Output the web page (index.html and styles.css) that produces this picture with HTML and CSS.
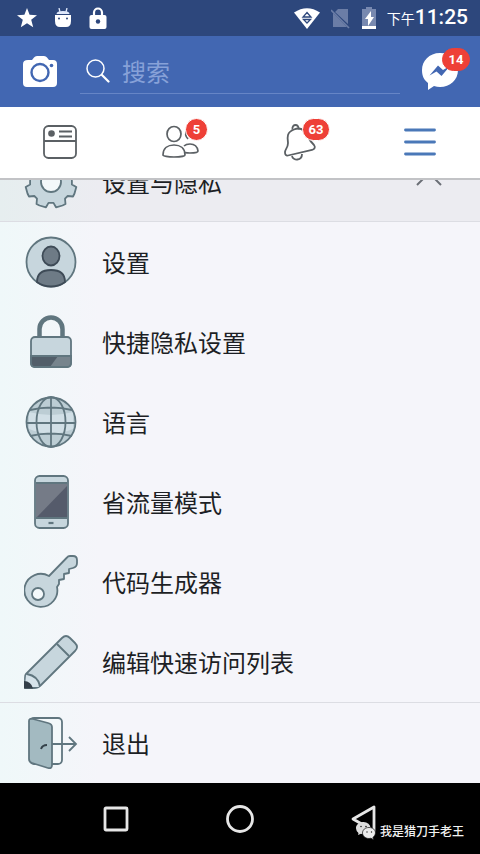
FILE: index.html
```html
<!DOCTYPE html>
<html lang="zh-CN">
<head>
<meta charset="utf-8">
<meta name="viewport" content="width=device-width, initial-scale=1">
<title>设置与隐私</title>
<link rel="stylesheet" href="styles.css">
</head>
<body>
<div class="status">
  <div class="status-left">
    <svg width="20" height="20" viewBox="0 0 20 20"><path fill="#fff" d="M10 0l2.600 6.800 7.400.4-5.800 4.600 2 7.400L10 15.200l-6.200 4 2-7.400L0 7.200l7.400-.4z"/></svg>
    <svg width="18" height="20" viewBox="0 0 18 20"><path d="M5 0l1 4M13 0l-1 4" stroke="#dfe8fb" stroke-width="1.300"/><path fill="#dfe8fb" d="M2.500 6q0-3 6.500-3t6.500 3z"/><path fill="#fff" d="M1 7h16v6q0 6-5 6H6q-5 0-5-6z"/><circle cx="5" cy="10.500" r="1" fill="#2d477c"/><circle cx="13" cy="10.500" r="1" fill="#2d477c"/></svg>
    <svg width="18" height="22" viewBox="0 0 18 22"><path d="M5 9V5.500a4 4 0 0 1 8 0V9" fill="none" stroke="#fff" stroke-width="2.200"/><rect x="0.500" y="8" width="17" height="14" rx="2" fill="#fff"/><circle cx="9" cy="14.500" r="2.200" fill="#2d477c"/></svg>
  </div>
  <div class="status-right">
    <svg width="26" height="21" viewBox="0 0 26 21"><path fill="#fff" d="M0 4.500Q13-4 26 4.500L13 21z"/><path d="M13 4.500l4 4.500H9zM9.500 11.500h7L13 15z" fill="none" stroke="#2d477c" stroke-width="1.300"/></svg>
    <svg width="20" height="21" viewBox="0 0 20 21"><path fill="#6b7da6" d="M7 1h10v15L4 4z M2 5l14 14H2z"/><path d="M0 2l18 18" stroke="#6b7da6" stroke-width="1.600"/></svg>
    <svg width="14" height="22" viewBox="0 0 14 22"><path fill="#7889b0" d="M4 0h6v2h4v17H0V2h4z"/><path fill="#fff" d="M0 19h14v3H0zM9 4v6h3l-6 9v-7H3z"/></svg>
    <span class="time"><small>下午</small>11:25</span>
  </div>
</div>

<header class="topbar">
  <button class="plain" aria-label="相机">
    <svg width="34" height="32" viewBox="0 0 34 32"><path fill="#fff" d="M5 4h4l2-2.500Q12 0 14 0h7q2 0 3 1.500L26 4h4q4 0 4 4v19q0 4-4 4H4q-4 0-4-4V8q0-4 5-4z"/><circle cx="17" cy="16.500" r="8.500" fill="none" stroke="#4267b2" stroke-width="2.400"/><circle cx="28.500" cy="9.500" r="1.800" fill="#4267b2"/></svg>
  </button>
  <label class="search">
    <svg width="24" height="24" viewBox="0 0 24 24" fill="none" stroke="#fff" stroke-linecap="round"><circle cx="9.500" cy="9.500" r="8.500" stroke-width="1.500"/><path d="M16 16l6.500 6.500" stroke-width="2.200"/></svg>
    <input type="text" placeholder="搜索" aria-label="搜索">
  </label>
  <button class="plain messenger" aria-label="消息">
    <svg width="38" height="37" viewBox="0 0 38 37"><path fill="#fff" d="M19 0C8 0 1 8 1 17c0 6 2 10 6 13v7l6-4q3 1 6 1c10 0 18-7 18-17S29 0 19 0z"/><path fill="#4267b2" d="M8.500 22.500L17 12.500l5 4.500 7-4-8.500 10-5-4.500z"/></svg>
    <span class="badge badge-messenger">14</span>
  </button>
</header>

<nav class="tabs">
  <a href="#feed" aria-label="动态">
    <svg width="36" height="36" viewBox="0 0 36 36" fill="none" stroke="#5b6064" stroke-width="1.800"><rect x="2" y="2" width="32" height="32" rx="4.500"/><path d="M2 17h32M17 7.500h13M17 12.500h13"/><circle cx="9.500" cy="9.500" r="3.300" fill="#5b6064" stroke="none"/></svg>
  </a>
  <a href="#friends" aria-label="好友">
    <svg width="38" height="36" viewBox="0 0 38 36" fill="none" stroke="#5b6064" stroke-width="1.700"><ellipse cx="13" cy="10" rx="7" ry="7.500"/><path d="M2 31c0-7 5-10 11-10s11 3 11 10c0 1-5 2-11 2s-11-1-11-2z"/><path d="M23 22q2-2 6-2 7 0 8 7 0 2-8 2-3 0-5-.4"/><path d="M26 6q-3 5 1 9"/></svg>
    <span class="badge">5</span>
  </a>
  <a href="#alerts" aria-label="通知">
    <svg width="36" height="38" viewBox="0 0 36 38" fill="none" stroke="#5b6064" stroke-width="1.800"><path d="M12 6.500C5 9 5 14 6 20c0 5-3 6-3 9.500 0 2 1 3.500 3 3l24-5.500c3-1 3.500-3 2-5-3-3-4-4-6-8-3-7-8-10-14-7.500z"/><path d="M10.500 6.500c-1-6 7-6 6 0M10 33c1 5 10 5 10-2"/></svg>
    <span class="badge badge-wide">63</span>
  </a>
  <a href="#menu" aria-label="菜单">
    <svg width="32" height="28" viewBox="0 0 32 28" fill="none" stroke="#4a78b8" stroke-width="2.800" stroke-linecap="round"><path d="M1.500 2h29M1.500 14h29M1.500 26h29"/></svg>
  </a>
</nav>

<main class="list">
  <button class="row heading">
    <svg class="icon" viewBox="-27 -27 54 54"><path class="body" d="M20.900 2.500L25.300 5 23.500 11.500 22 14.500 16.700 14 14 16.700 14.500 22 11.500 23.500 5 25.300 2.500 20.900H-2.500L-5 25.300-11.500 23.500-14.500 22-14 16.700-16.700 14-22 14.500-23.500 11.500-25.300 5-20.900 2.500V-2.500L-25.300-5-23.500-11.500-22-14.500-16.700-14-14-16.700-14.500-22-11.500-23.500-5-25.300-2.500-20.900H2.500L5-25.300 11.500-23.500 14.500-22 14-16.700 16.700-14 22-14.500 23.500-11.500 25.300-5 20.900-2.500z"/><circle class="hole" r="10"/></svg>
    <span>设置与隐私</span>
    <svg class="chevron" width="26" height="20" viewBox="0 0 26 20"><path d="M1 13L13 1l12 12" fill="none" stroke="#6b6f76" stroke-width="2"/></svg>
  </button>
  <a class="row" href="#settings">
    <svg class="icon" viewBox="0 0 54 54"><circle class="body" cx="27" cy="27" r="24.500"/><g fill="#6e7b86" stroke="#3e4b57" stroke-width="1.800"><ellipse cx="27" cy="21" rx="8.500" ry="9.500"/><path d="M13 47c0-8 5-12 14-12s14 4 14 12q-6 4.500-14 4.500T13 47z"/></g></svg>
    <span>设置</span>
  </a>
  <a class="row" href="#shortcuts">
    <svg class="icon" viewBox="0 0 54 54"><path d="M15.500 22V14a11.500 11.500 0 0 1 23 0v8" fill="none" stroke="#60767f" stroke-width="4.500"/><rect class="body" x="7" y="22" width="40" height="30" rx="4"/><path d="M7 41h40v7q0 4-4 4H11q-4 0-4-4z" fill="#525e69"/><path d="M34 41h13v7q0 4-4 4H26z" fill="#77848d"/><path class="line" d="M7 41h40v7q0 4-4 4H11q-4 0-4-4z"/></svg>
    <span>快捷隐私设置</span>
  </a>
  <a class="row" href="#language">
    <svg class="icon" viewBox="0 0 54 54"><circle cx="27" cy="27" r="24.500" fill="#bccdd4"/><path fill="#d1dfe6" d="M5 17q22 6 44 0v17q-22 9-44 0z"/><path class="line" d="M27 2v50M2 28h50M6 15q21-5 42 0M6 41q21-5 42 0"/><ellipse class="line" cx="27" cy="27" rx="14.500" ry="25"/><circle class="line" cx="27" cy="27" r="24.500"/></svg>
    <span>语言</span>
  </a>
  <a class="row" href="#data">
    <svg class="icon" viewBox="0 0 54 54"><rect class="body" x="11" y="1" width="33" height="52" rx="4.500"/><path fill="#555b6b" d="M12 8h31v35H12z"/><path fill="#757b87" d="M43 11L12 43V8h31z"/><path class="line" d="M12 8h31M12 43h31"/><path d="M24.500 48h5" stroke="#60767f" stroke-width="2.200"/></svg>
    <span>省流量模式</span>
  </a>
  <a class="row" href="#code">
    <svg class="icon" viewBox="0 0 54 54"><path class="body" d="M25 21L43 2.500Q44 1 46 1h3q4 0 4 4v3q0 4-4 5l-4 1v4l-5 1v5l-5 1v4l-2 3A16.500 16.500 0 1 1 25 21z"/><circle class="hole" cx="14" cy="39" r="6"/></svg>
    <span>代码生成器</span>
  </a>
  <a class="row" href="#quick">
    <svg class="icon" viewBox="0 0 54 54"><path class="body" d="M2 39L38 3q4-4 8 0l5 5q4 4 0 8L17 50q-3 3-7 3H1V43q0-3 1-4z"/><path fill="#d6e3ea" d="M2 40q11 1 13 12H1z"/><path fill="#343f49" d="M0 46q7 0 9 7.500H0z"/><path class="line" d="M33 9l12 12M3 39q11 2 13 12"/></svg>
    <span>编辑快速访问列表</span>
  </a>
  <a class="row exit" href="#logout">
    <svg class="icon" viewBox="0 0 54 54"><rect class="hole" x="6" y="2" width="32" height="46" rx="4"/><path d="M5 5q0-3 4-2l15 4q4 1 4 4v38q0 4-4 3L8 47q-3-1-3-4z" fill="#a3bac1" stroke="#60767f" stroke-width="1.800"/><path d="M17 33c1-3 3-4 6-4" fill="none" stroke="#35424a" stroke-width="1.900"/><path class="line" d="M28 28h24M45 21l7 7-7 7"/></svg>
    <span>退出</span>
  </a>
</main>

<footer class="navbar">
  <button class="plain" aria-label="最近"><svg width="28" height="28" viewBox="0 0 28 28"><rect x="3" y="3" width="22" height="22" rx="1"/></svg></button>
  <button class="plain" aria-label="主页"><svg width="28" height="28" viewBox="0 0 28 28"><circle cx="14" cy="14" r="12.500"/></svg></button>
  <button class="plain" aria-label="返回"><svg width="28" height="28" viewBox="0 0 28 28"><path d="M3 14L24 2v24z"/></svg></button>
  <div class="mark">
    <svg width="20" height="18" viewBox="0 0 20 18"><path fill="#dedede" d="M8 0C3 0 0 3 0 6q0 3 2.500 5L2 13l3-1.300 3 .3z"/><ellipse cx="7.500" cy="6" rx="7" ry="6" fill="#dedede"/><path fill="#ececec" stroke="#111" stroke-width=".7" d="M13 5.500c-4 0-6.500 2.500-6.500 5.500s3 5.500 6.500 5.500l2-.3 2.500 1.500-.5-2.300q2.500-2 2.500-4.400c0-3-2.500-5.500-6.500-5.500z"/><g fill="#222"><circle cx="5" cy="4.500" r=".8"/><circle cx="10" cy="4.500" r=".8"/><circle cx="11" cy="10" r=".7"/><circle cx="15.500" cy="10" r=".7"/></g></svg>
    <span>我是猎刀手老王</span>
  </div>
</footer>
</body>
</html>
```
FILE: styles.css
```css
* { box-sizing: border-box; }

body {
  margin: 0;
  height: 100vh;
  display: flex;
  flex-direction: column;
  font-family: Roboto, "Noto Sans CJK SC", sans-serif;
  color: #1d1f25;
  background: #f5f5fa;
}

svg { display: block; flex: none; }
a { color: inherit; text-decoration: none; }

.plain {
  display: block;
  padding: 0;
  border: 0;
  background: none;
}

.status {
  flex: none;
  height: 36px;
  padding: 0 12px 0 17px;
  display: flex;
  align-items: center;
  justify-content: space-between;
  background: #2d477c;
}

.status-left { display: flex; align-items: center; gap: 17px; }
.status-right { display: flex; align-items: center; gap: 11px; }

.time {
  color: #fff;
  font-size: 21px;
  font-weight: 500;
  line-height: 36px;
}

.time small { font-size: 14px; font-weight: 400; }

.topbar {
  flex: none;
  height: 71px;
  padding: 0 21px 0 23px;
  display: flex;
  align-items: center;
  background: #4267b2;
}

.search {
  flex: 1;
  min-width: 0;
  height: 44px;
  margin: 0 21px 0 23px;
  padding: 0 6px;
  display: flex;
  align-items: center;
  gap: 12px;
  border-bottom: 1px solid #6685c6;
}

.search input {
  flex: 1;
  min-width: 0;
  padding: 0;
  border: 0;
  outline: 0;
  background: none;
  color: #fff;
  font: 24px/36px "Noto Sans CJK SC", sans-serif;
}

.search input::placeholder { color: #87a1d8; opacity: 1; }

.messenger { position: relative; }

.badge {
  position: absolute;
  top: 11px;
  left: calc(50% + 5px);
  min-width: 23px;
  height: 23px;
  padding: 0 5px;
  border: 1px solid #fff;
  border-radius: 12px;
  background: #ee4037;
  color: #fff;
  font: 700 13px/21px Roboto, sans-serif;
  text-align: center;
}

.badge-wide { left: calc(50% + 2px); min-width: 28px; }
.badge-messenger { top: -5px; left: 21px; min-width: 28px; border-color: #ee4037; }

.tabs {
  flex: none;
  height: 73px;
  display: grid;
  grid-template-columns: repeat(4, 1fr);
  background: #fff;
  border-bottom: 2px solid #c2c3c6;
}

.tabs a {
  position: relative;
  padding-bottom: 1px;
  display: flex;
  align-items: center;
  justify-content: center;
}

/* The list is scrolled to its end, so its first row is partly hidden. */
.list {
  flex: 1;
  min-height: 0;
  overflow: hidden;
  display: flex;
  flex-direction: column;
  justify-content: flex-end;
  background: linear-gradient(90deg, #eff8f9 0, #f5f5fa 100px);
}

.row {
  flex: none;
  height: 80px;
  padding: 0 38px 0 24px;
  display: flex;
  align-items: center;
  gap: 24px;
  border: 0;
  background: none;
  color: inherit;
  font: 24px/36px "Noto Sans CJK SC", sans-serif;
  text-align: left;
}

.heading {
  background: linear-gradient(90deg, #e6eeef 0, #ececf1 100px);
  border-bottom: 1px solid #dcdde3;
}

.exit { height: 81px; border-top: 1px solid #dcdde3; }
.chevron { margin-left: auto; }

.icon { width: 54px; height: 54px; }
.body { fill: #c7d6dd; stroke: #60767f; stroke-width: 1.800; stroke-linejoin: round; }
.hole { fill: #f3f8fa; stroke: #60767f; stroke-width: 1.800; }
.line { fill: none; stroke: #60767f; stroke-width: 1.800; }

.navbar {
  position: relative;
  flex: none;
  height: 71px;
  padding: 0 54px;
  display: grid;
  grid-template-columns: repeat(3, 1fr);
  align-items: center;
  justify-items: center;
  background: #000;
}

.navbar button svg { fill: none; stroke: #e6e6e6; stroke-width: 2.800; stroke-linejoin: round; }

.mark {
  position: absolute;
  right: 16px;
  bottom: 14px;
  display: flex;
  align-items: center;
  gap: 4px;
  color: #f2f2f2;
  font: 500 12px/18px "Noto Sans CJK SC", sans-serif;
}
```
